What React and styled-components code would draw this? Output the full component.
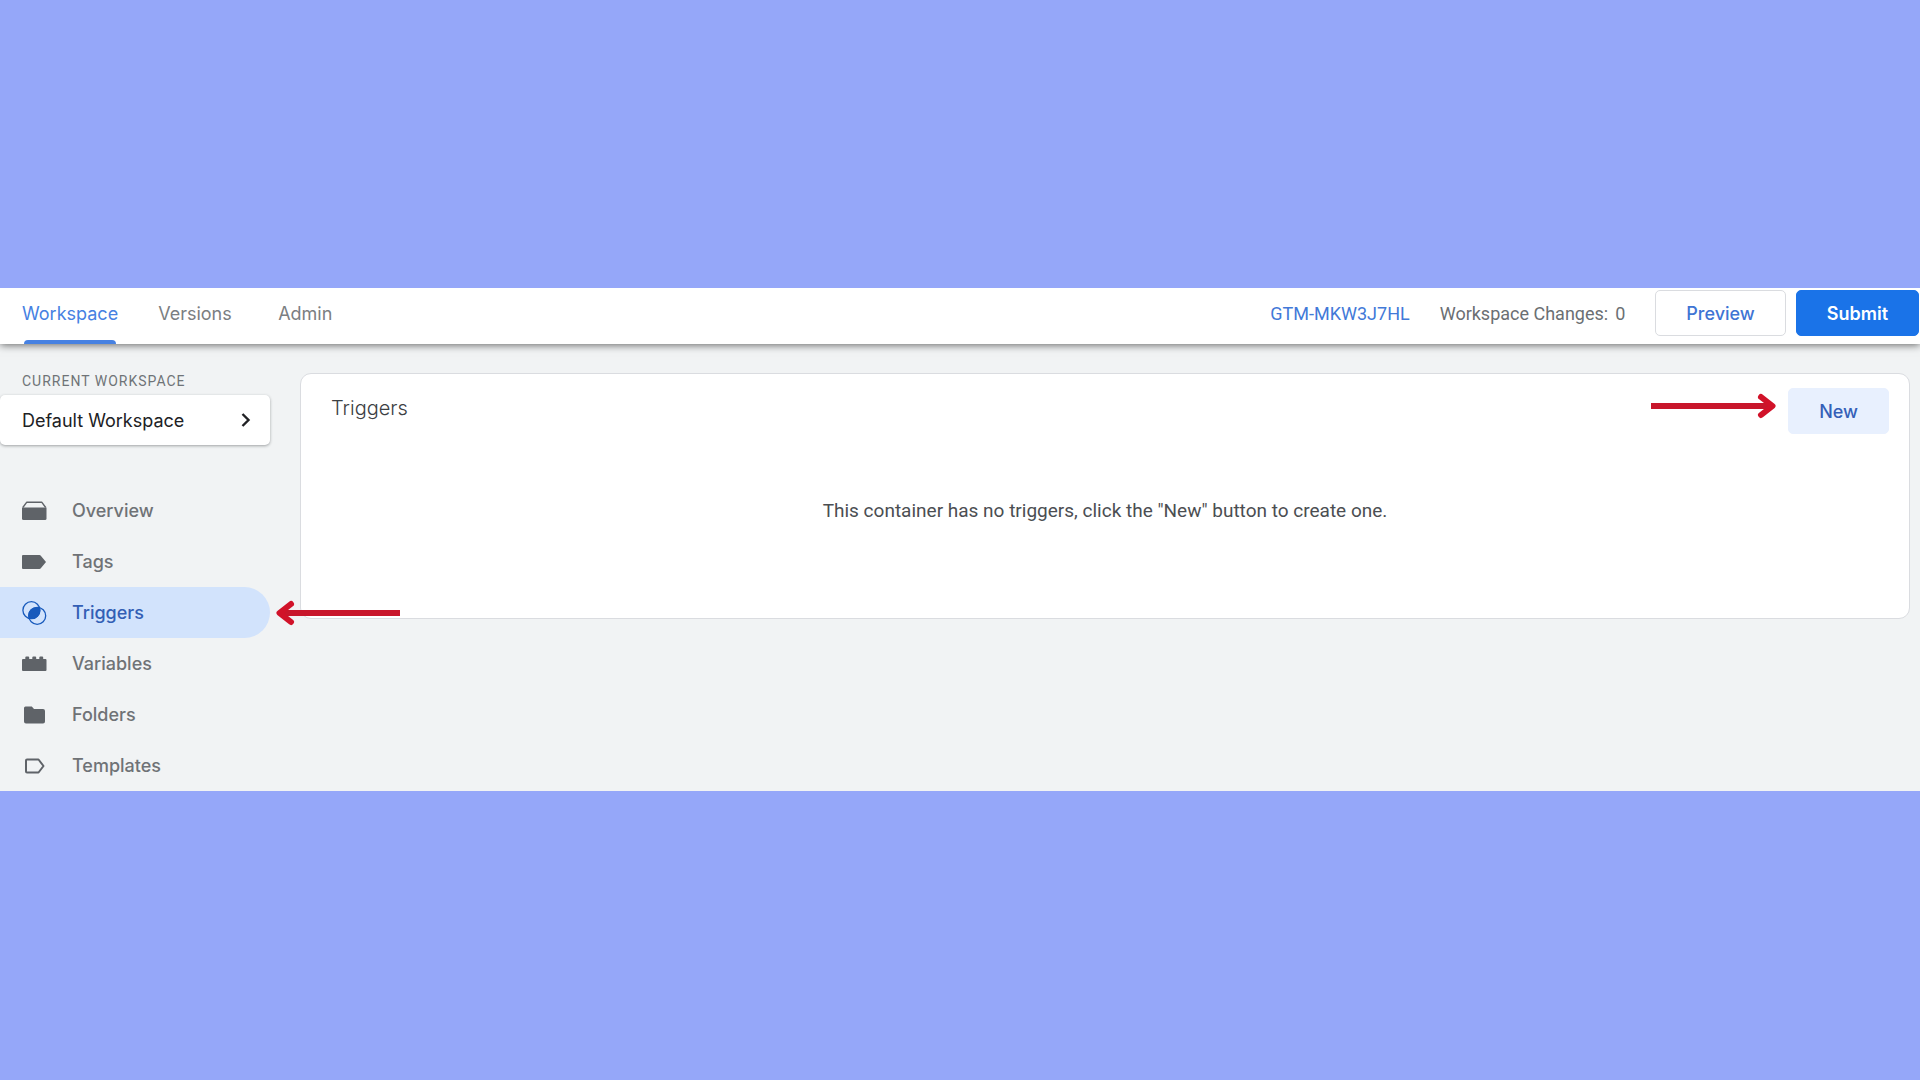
import React from "react";
import styled, { createGlobalStyle, css } from "styled-components";

const GlobalStyle = createGlobalStyle`
  *, *::before, *::after {
    box-sizing: border-box;
  }

  body {
    margin: 0;
    background: #95a7f9;
    font-family: Roboto, "Liberation Sans", sans-serif;
  }

  button {
    font: inherit;
    cursor: pointer;
  }

  a {
    text-decoration: none;
  }
`;

const brandFont = css`
  font-family: Inter, Roboto, sans-serif;
`;

const Page = styled.div`
  min-height: 100vh;
  display: flex;
  flex-direction: column;
  justify-content: center;
  padding-bottom: 1px;
`;

const Console = styled.div`
  background: #f1f3f4;
`;

/* Header */

const Header = styled.header`
  position: relative;
  z-index: 1;
  height: 56px;
  display: flex;
  justify-content: space-between;
  background: #fff;
  box-shadow: 0 1px 8px rgba(0, 0, 0, 0.6);
  clip-path: inset(0 0 -16px 0);
`;

const Tabs = styled.nav`
  display: flex;
  gap: 40px;
  padding-left: 22px;
`;

const Tab = styled.a`
  ${brandFont}
  min-width: 80px;
  display: flex;
  flex-direction: column;
  padding-top: 14px;
  font-size: 18px;
  line-height: 24px;
  color: ${({ $active }) => ($active ? "#4681e2" : "#7b7e82")};

  &::after {
    content: "";
    height: 4px;
    margin: auto 2px 0;
    border-radius: 4px 4px 0 0;
    background: ${({ $active }) => ($active ? "#4681e2" : "transparent")};
  }
`;

const Actions = styled.div`
  display: flex;
  align-items: flex-start;
  gap: 10px;
  padding: 2px 1px 0 0;
`;

const Meta = styled.div`
  display: flex;
  gap: 30px;
  margin-right: 20px;
  font-size: 18px;
  line-height: 48px;
  color: #6b6f73;
`;

const ContainerId = styled.a`
  color: #4279d8;
`;

const Changes = styled.div`
  display: flex;
  gap: 7px;
`;

const buttonColors = {
  outline: css`
    border: 1px solid #dadce0;
    background: #fff;
    color: #3f75d4;
  `,
  primary: css`
    border: 1px solid #1a73e8;
    background: #1a73e8;
    color: #fff;
    font-weight: 600;
  `,
  tonal: css`
    border: 1px solid #e8f0fe;
    background: #e8f0fe;
    color: #345fb8;
  `,
};

const Button = styled.button`
  ${brandFont}
  height: 46px;
  padding: 0 30px;
  border-radius: 5px;
  font-size: 18px;
  font-weight: 500;
  ${({ $variant }) => buttonColors[$variant]}
`;

/* Sidebar */

const Body = styled.div`
  display: flex;
`;

const Sidebar = styled.aside`
  flex: none;
  width: 270px;
  padding-top: 27px;
`;

const Overline = styled.h2`
  margin: 0 0 4px;
  padding-left: 22px;
  font-size: 14px;
  font-weight: 400;
  line-height: 20px;
  letter-spacing: 1px;
  color: #6f7377;
`;

const WorkspacePicker = styled.button`
  ${brandFont}
  width: 100%;
  height: 50px;
  display: flex;
  align-items: center;
  justify-content: space-between;
  padding: 0 16px 0 22px;
  border: 0;
  border-radius: 5px;
  background: #fff;
  box-shadow: 0 1px 3px rgba(60, 64, 67, 0.45);
  font-size: 18px;
  color: #202124;
`;

const NavList = styled.ul`
  margin: 40px 0 0;
  padding: 0;
  list-style: none;
`;

const NavItem = styled.li`
  position: relative;
`;

const NavLink = styled.a`
  ${brandFont}
  height: 51px;
  display: flex;
  align-items: center;
  gap: 25px;
  padding-left: 22px;
  border-radius: 0 26px 26px 0;
  font-size: 18px;
  font-weight: 500;
  background: ${({ $active }) => ($active ? "#d2e3fc" : "transparent")};
  color: ${({ $active }) => ($active ? "#335fb5" : "#6f7276")};

  svg {
    flex: none;
    color: ${({ $active }) => ($active ? "#185abc" : "#5f6368")};
  }
`;

/* Content */

const Main = styled.main`
  flex: 1;
  padding: 29px 10px 30px 30px;
`;

const Card = styled.section`
  min-height: 246px;
  border: 1px solid #dadce0;
  border-radius: 11px;
  background: #fff;
`;

const CardHeader = styled.div`
  display: flex;
  justify-content: space-between;
  align-items: flex-start;
  padding: 14px 20px 0 30px;
`;

const CardTitle = styled.h1`
  ${brandFont}
  margin: 0;
  font-size: 20px;
  font-weight: 300;
  line-height: 40px;
  color: #3c4043;
`;

const NewAction = styled.div`
  position: relative;
`;

const EmptyMessage = styled.p`
  margin: 65px 0 0;
  text-align: center;
  font-size: 19px;
  line-height: 24px;
  color: #4b4e52;
`;

/* Callout arrows drawn over the console */

const Callout = styled.svg`
  position: absolute;
  top: 50%;
  z-index: 2;
  width: 125px;
  height: 26px;
  margin-top: ${({ $lift }) => ($lift ? "-18px" : "-13px")};
  ${({ $side }) => ($side === "left" ? "right: calc(100% + 12px);" : "left: calc(100% + 6px);")}
`;

const ArrowRight = () => (
  <Callout $side="left" $lift viewBox="0 0 125 26" aria-hidden="true">
    <path d="M0 13H119" stroke="#c8162b" strokeWidth="6" />
    <path d="M110 4L121.500 13L110 22" fill="none" stroke="#d11229" strokeWidth="6" strokeLinecap="round" strokeLinejoin="round" />
  </Callout>
);

const ArrowLeft = () => (
  <Callout $side="right" viewBox="0 0 125 26" aria-hidden="true">
    <path d="M124 13H6" stroke="#c8162b" strokeWidth="6" />
    <path d="M15 4L3.500 13L15 22" fill="none" stroke="#d11229" strokeWidth="6" strokeLinecap="round" strokeLinejoin="round" />
  </Callout>
);

const Icon = ({ children }) => (
  <svg width="25" height="24" viewBox="0 0 25 24" fill="currentColor" aria-hidden="true">
    {children}
  </svg>
);

const OverviewIcon = () => (
  <Icon>
    <path d="M0 8.500H24.500V19.500Q24.500 21 23 21H1.500Q0 21 0 19.500Z" />
    <path d="M0.800 8.500L4.800 3.200H19.700L23.700 8.500" fill="none" stroke="currentColor" strokeWidth="1.400" strokeLinejoin="round" />
  </Icon>
);

const TagIcon = () => (
  <Icon>
    <path d="M1 5H17.500Q18.300 5 18.800 5.700L24 12L18.800 18.300Q18.300 19 17.500 19H1Q0 19 0 18V6Q0 5 1 5Z" />
  </Icon>
);

const TriggerIcon = () => (
  <Icon>
    <circle cx="9.400" cy="9.200" r="8.500" fill="none" stroke="currentColor" strokeWidth="1.300" />
    <circle cx="15.200" cy="14.800" r="8.500" fill="none" stroke="currentColor" strokeWidth="1.300" />
    <path d="M17.700 6.500A8.500 8.500 0 0 1 6.900 17.500A8.500 8.500 0 0 1 17.700 6.500Z" />
  </Icon>
);

const VariableIcon = () => (
  <Icon>
    <path d="M1 7H3.300V5.500Q3.300 4.500 4.300 4.500H6.200Q7.200 4.500 7.200 5.500V7H10.300V5.500Q10.300 4.500 11.300 4.500H13.200Q14.200 4.500 14.200 5.500V7H17.300V5.500Q17.300 4.500 18.300 4.500H20.200Q21.200 4.500 21.200 5.500V7H23.500Q24.500 7 24.500 8V18Q24.500 19 23.500 19H1Q0 19 0 18V8Q0 7 1 7Z" />
  </Icon>
);

const FolderIcon = () => (
  <Icon>
    <path d="M3.500 3.500H9.800L12 6H21Q23 6 23 8V18.500Q23 20.500 21 20.500H4Q2 20.500 2 18.500V5Q2 3.500 3.500 3.500Z" />
  </Icon>
);

const TemplateIcon = () => (
  <Icon>
    <path d="M5 5.500H16.500L21.500 12L16.500 18.500H5Q4 18.500 4 17.500V6.500Q4 5.500 5 5.500Z" fill="none" stroke="currentColor" strokeWidth="2" strokeLinejoin="round" />
  </Icon>
);

const ChevronIcon = () => (
  <svg width="16" height="16" viewBox="0 0 16 16" aria-hidden="true">
    <path d="M4.500 2L10.500 8L4.500 14" fill="none" stroke="#202124" strokeWidth="2.400" />
  </svg>
);

const navItems = [
  { label: "Overview", icon: OverviewIcon },
  { label: "Tags", icon: TagIcon },
  { label: "Triggers", icon: TriggerIcon, active: true },
  { label: "Variables", icon: VariableIcon },
  { label: "Folders", icon: FolderIcon },
  { label: "Templates", icon: TemplateIcon },
];

const App = () => {
  return (
    <Page>
      <GlobalStyle />
      <Console>
        <Header>
          <Tabs aria-label="Container">
            <Tab href="#workspace" $active>Workspace</Tab>
            <Tab href="#versions">Versions</Tab>
            <Tab href="#admin">Admin</Tab>
          </Tabs>
          <Actions>
            <Meta>
              <ContainerId href="#container">GTM-MKW3J7HL</ContainerId>
              <Changes>
                <span>Workspace Changes:</span>
                <span>0</span>
              </Changes>
            </Meta>
            <Button $variant="outline">Preview</Button>
            <Button $variant="primary">Submit</Button>
          </Actions>
        </Header>

        <Body>
          <Sidebar>
            <Overline>CURRENT WORKSPACE</Overline>
            <WorkspacePicker>
              Default Workspace
              <ChevronIcon />
            </WorkspacePicker>
            <NavList>
              {navItems.map(({ label, icon: ItemIcon, active }) => (
                <NavItem key={label}>
                  <NavLink href={`#${label.toLowerCase()}`} $active={active}>
                    <ItemIcon />
                    {label}
                  </NavLink>
                  {active && <ArrowLeft />}
                </NavItem>
              ))}
            </NavList>
          </Sidebar>

          <Main>
            <Card>
              <CardHeader>
                <CardTitle>Triggers</CardTitle>
                <NewAction>
                  <ArrowRight />
                  <Button $variant="tonal">New</Button>
                </NewAction>
              </CardHeader>
              <EmptyMessage>
                This container has no triggers, click the "New" button to create one.
              </EmptyMessage>
            </Card>
          </Main>
        </Body>
      </Console>
    </Page>
  );
};

export default App;
